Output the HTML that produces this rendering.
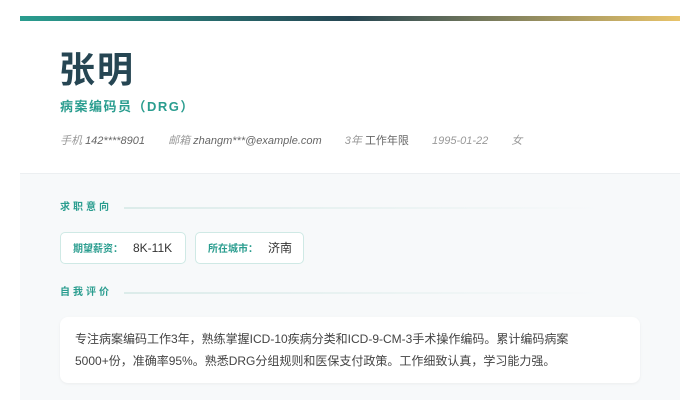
<!DOCTYPE html><html><head><meta charset="utf-8"><style>
*{margin:0;padding:0;box-sizing:border-box}
body{width:700px;height:400px;background:#fff;font-family:"Liberation Sans","Noto Sans CJK SC",sans-serif;position:relative;overflow:hidden}
.bar{position:absolute;left:20px;top:16px;width:660px;height:5px;background:linear-gradient(90deg,#2a9d8f,#264653 50%,#e9c46a)}
.name{position:absolute;left:59px;top:48px;font-size:36px;font-weight:bold;color:#264653;letter-spacing:2px;line-height:44px}
.sub{position:absolute;left:60px;top:98px;font-size:13px;font-weight:bold;color:#2a9d8f;letter-spacing:1.5px;line-height:18px}
.meta{position:absolute;left:60px;top:134px;font-size:11px;color:#999;font-style:italic;line-height:14px;white-space:nowrap}
.meta b{font-weight:normal;color:#666;margin-right:20px}
.gray{position:absolute;left:20px;top:173px;width:660px;height:227px;background:#f7f9fa;border-top:1px solid #eceff1}
.st{position:absolute;left:60px;font-size:10px;font-weight:bold;color:#2a9d8f;letter-spacing:3px;line-height:12px}
.ln{position:absolute;left:124px;width:476px;height:2px;background:linear-gradient(90deg,#dcecea,rgba(220,236,234,0))}
.tag{position:absolute;top:232px;height:32px;background:#fff;border:1px solid #cfe9e5;border-radius:5px;font-size:12px;color:#333;line-height:30px;padding-left:12px}
.tag i{font-style:normal;font-size:10px;font-weight:bold;color:#2a9d8f;margin-right:10px}
.box{position:absolute;left:60px;top:317px;width:580px;height:66px;background:#fff;border-radius:8px;box-shadow:0 1px 3px rgba(0,0,0,.05);font-size:12px;color:#444;line-height:22px;padding:11px 0 0 15px}
</style></head><body>
<div class="bar"></div>
<div class="name">张明</div>
<div class="sub">病案编码员（DRG）</div>
<div class="meta">手机 <b>142****8901</b> 邮箱 <b>zhangm***@example.com</b> 3年 <b style="font-style:normal">工作年限</b> <span style="margin-right:20px">1995-01-22</span> 女</div>
<div class="gray"></div>
<div class="st" style="top:202px">求职意向</div><div class="ln" style="top:207px"></div>
<div class="tag" style="left:60px;width:126px"><i>期望薪资：</i>8K-11K</div>
<div class="tag" style="left:195px;width:109px"><i>所在城市：</i>济南</div>
<div class="st" style="top:287px">自我评价</div><div class="ln" style="top:292px"></div>
<div class="box">专注病案编码工作3年，熟练掌握ICD-10疾病分类和ICD-9-CM-3手术操作编码。累计编码病案<br>5000+份，准确率95%。熟悉DRG分组规则和医保支付政策。工作细致认真，学习能力强。</div>
</body></html>
